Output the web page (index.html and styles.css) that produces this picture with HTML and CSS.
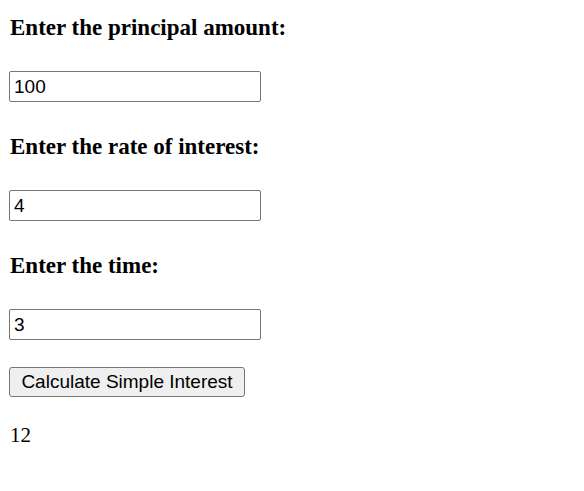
FILE: index.html
```html
<!DOCTYPE html>
<html lang="en">
<head>
    <meta charset="UTF-8">
    <meta name="viewport" content="width=device-width, initial-scale=1.0">
    <title>Simple Interest</title>
    <link rel="stylesheet" href="styles.css">
</head>
<body>

    <div class="calc">
        <h3 class="label">Enter the principal amount:</h3>
        <input type="text" class="field" id="principal" value="100">

        <h3 class="label">Enter the rate of interest:</h3>
        <input type="text" class="field" id="rate" value="4">

        <h3 class="label">Enter the time:</h3>
        <input type="text" class="field field-last" id="time" value="3">

        <button id="calcBtn" class="calc-btn">Calculate Simple Interest</button>
        <p id="result" class="result">12</p>
    </div>

</body>
</html>
```

FILE: styles.css
```css
body {
    margin: 0;
    font-family: "Liberation Serif", "Times New Roman", serif;
    color: #000;
    background: #fff;
}
.calc {
    display: flex;
    flex-direction: column;
    align-items: flex-start;
    padding: 15px 9px;
}
.label {
    margin: 0 0 30px 1px;
    font-size: 23px;
    font-weight: bold;
    line-height: 26px;
}
.field {
    box-sizing: border-box;
    width: 252px;
    height: 31px;
    margin: 0 0 32px 0;
    padding: 0 4px;
    font-family: "Liberation Sans", Arial, sans-serif;
    font-size: 19px;
    color: #000;
    border: 1px solid #767676;
    border-radius: 2px;
    background: #fff;
}
.field-last {
    margin-bottom: 27px;
}
.calc-btn {
    box-sizing: border-box;
    width: 236px;
    height: 30px;
    padding: 0 11px;
    font-family: "Liberation Sans", Arial, sans-serif;
    font-size: 19px;
    color: #000;
    background: #efefef;
    border: 1px solid #767676;
    border-radius: 3px;
}
.result {
    margin: 26px 0 0 1px;
    font-size: 21px;
    line-height: 24px;
}
```
